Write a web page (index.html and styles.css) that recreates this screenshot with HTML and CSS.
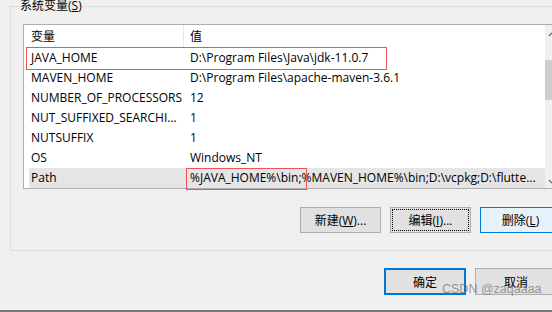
FILE: index.html
```html
<!DOCTYPE html>
<html>
<head>
  <meta charset="UTF-8">
  <title>系统变量</title>
  <link rel="stylesheet" href="styles.css">
</head>
<body>
  <div class="dialog">
    <div class="group">
      <span class="group-title">系统变量(<u>S</u>)</span>

      <div class="listbox">
        <div class="list-main">
          <div class="list-head">
            <div class="head-name">变量</div>
            <div class="head-value">值</div>
          </div>
          <div class="row"><div class="col-name">JAVA_HOME</div><div class="col-value">D:\Program Files\Java\jdk-11.0.7</div></div>
          <div class="row"><div class="col-name">MAVEN_HOME</div><div class="col-value">D:\Program Files\apache-maven-3.6.1</div></div>
          <div class="row"><div class="col-name">NUMBER_OF_PROCESSORS</div><div class="col-value">12</div></div>
          <div class="row"><div class="col-name">NUT_SUFFIXED_SEARCHI...</div><div class="col-value">1</div></div>
          <div class="row"><div class="col-name">NUTSUFFIX</div><div class="col-value">1</div></div>
          <div class="row"><div class="col-name">OS</div><div class="col-value">Windows_NT</div></div>
          <div class="row selected"><div class="col-name">Path</div><div class="col-value">%JAVA_HOME%\bin;%MAVEN_HOME%\bin;D:\vcpkg;D:\flutte...</div></div>
        </div>
        <div class="scrollbar">
          <div class="arrow">
            <svg width="17" height="17" viewBox="0 0 17 17"><polyline points="4,11 8.5,6.5 13,11" fill="none" stroke="#606060" stroke-width="1.2"/></svg>
          </div>
          <div class="track"><div class="thumb"></div></div>
          <div class="arrow">
            <svg width="17" height="17" viewBox="0 0 17 17"><polyline points="4,9 8.5,13.5 13,9" fill="none" stroke="#606060" stroke-width="1.2"/></svg>
          </div>
        </div>
        <div class="mark mark-java"></div>
        <div class="mark mark-path"></div>
      </div>

      <div class="btn-row">
        <button class="btn">新建(<u>W</u>)...</button>
        <button class="btn focused">编辑(<u>I</u>)...</button>
        <button class="btn hover">删除(<u>L</u>)</button>
      </div>
    </div>

    <div class="dialog-btns">
      <button class="btn default">确定</button>
      <button class="btn">取消</button>
    </div>

    <div class="bottom-edge"></div>
  </div>

  <span class="watermark">CSDN @zaqaaaa</span>
</body>
</html>
```

FILE: styles.css
```css
body {
  margin: 0;
  width: 552px;
  height: 312px;
  overflow: hidden;
  background: #f0f0f0;
  font-family: "Open Sans", "Noto Sans CJK SC", sans-serif;
  font-size: 12px;
  color: #000;
  position: relative;
}
.dialog {
  width: 620px;
}
.group {
  position: relative;
  margin: 6px 0 0 10px;
  height: 245px;
  box-sizing: border-box;
  border: 1px solid #dcdcdc;
}
.group-title {
  position: absolute;
  top: -8px;
  left: 8px;
  padding: 0 1px;
  line-height: 14px;
  background: #f0f0f0;
}
.listbox {
  position: relative;
  display: flex;
  margin: 17px 0 0 12px;
  width: 540px;
  height: 165px;
  box-sizing: border-box;
  border: 1px solid #adadad;
  background: #fff;
}
.list-main {
  width: 521px;
}
.list-head {
  display: flex;
  height: 23px;
  line-height: 23px;
}
.head-name {
  width: 152px;
  padding-left: 7px;
  border-right: 1px solid #e5e5e5;
}
.head-value {
  padding-left: 6px;
}
.row {
  display: flex;
  height: 20px;
  line-height: 20px;
  margin-left: 5px;
  white-space: nowrap;
}
.row.selected {
  background: #e5e5e5;
}
.col-name {
  width: 155px;
  padding-left: 2px;
  box-sizing: border-box;
  overflow: hidden;
}
.col-value {
  padding-left: 6px;
}
.scrollbar {
  width: 17px;
  display: flex;
  flex-direction: column;
  background: #f0f0f0;
}
.arrow {
  height: 17px;
}
.arrow svg {
  display: block;
}
.track {
  flex: 1;
  padding-top: 18px;
}
.thumb {
  width: 17px;
  height: 40px;
  background: #cdcdcd;
}
.mark {
  position: absolute;
  box-sizing: border-box;
  border: 1px solid #ee5555;
}
.mark-java {
  left: 2px;
  top: 22px;
  width: 361px;
  height: 23px;
}
.mark-path {
  left: 162px;
  top: 143px;
  width: 121px;
  height: 22px;
}
.btn-row {
  display: flex;
  gap: 9px;
  margin-top: 18px;
  padding-left: 289px;
}
.btn {
  width: 81px;
  height: 26px;
  padding: 0;
  border: 1px solid #adadad;
  background: #e1e1e1;
  font-family: "Open Sans", "Noto Sans CJK SC", sans-serif;
  font-size: 12px;
  color: #000;
}
.btn.focused {
  outline: 1px dotted #000;
  outline-offset: -3px;
}
.btn.hover {
  border-color: #0078d7;
  background: #e5f1fb;
}
.dialog-btns {
  display: flex;
  gap: 9px;
  margin-top: 17px;
  padding-left: 384px;
}
.dialog-btns .btn {
  width: 82px;
  height: 27px;
}
.btn.default {
  border: 2px solid #0078d7;
}
.bottom-edge {
  margin-top: 15px;
  height: 2px;
  background: #7a7a7a;
}
.watermark {
  position: absolute;
  left: 442px;
  top: 282px;
  font-family: "Liberation Sans", sans-serif;
  font-size: 12.5px;
  color: rgba(120, 120, 120, 0.75);
}
```
